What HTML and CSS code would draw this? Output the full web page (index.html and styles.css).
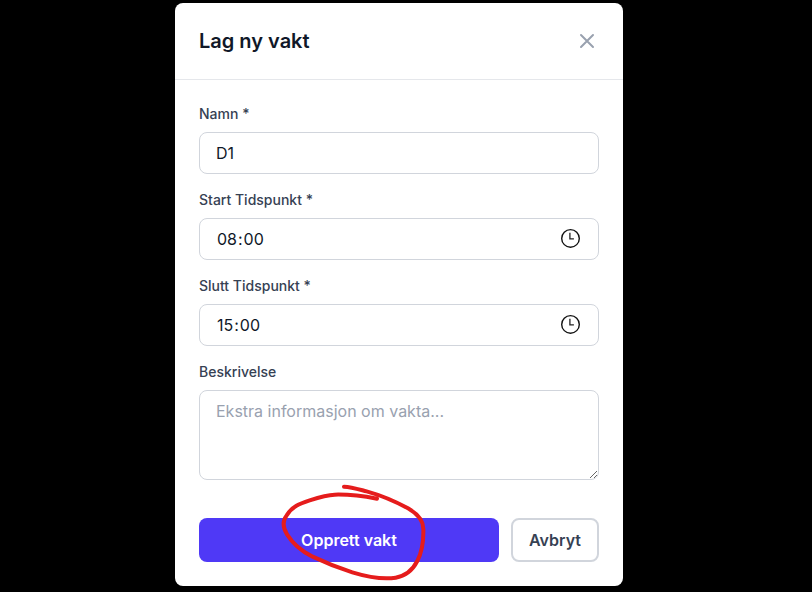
FILE: index.html
```html
<!DOCTYPE html>
<html lang="nn">
<head>
<meta charset="utf-8">
<title>Lag ny vakt</title>
<link rel="stylesheet" href="styles.css">
</head>
<body>
<main class="dialog">
  <header class="header">
    <h2 class="title">Lag ny vakt</h2>
    <button class="close" type="button">
      <svg width="24" height="24" viewBox="0 0 24 24" fill="none" stroke="currentColor" stroke-width="2" stroke-linecap="round"><path d="M6 18 18 6M6 6l12 12"/></svg>
    </button>
  </header>
  <form class="form">
    <div class="field">
      <label class="label" for="name">Namn *</label>
      <div class="control"><input class="input" id="name" type="text" value="D1"></div>
    </div>
    <div class="field">
      <span class="label">Start Tidspunkt *</span>
      <div class="control time">
        <div class="value"><span class="part">08</span><span>:</span><span class="part">00</span></div>
        <svg class="clock" width="20" height="20" viewBox="0 0 20 20" fill="none" stroke="#111"><circle cx="10.5" cy="10.4" r="8.8" stroke-width="1.4"/><path d="M9.9 4.8v6h4" stroke="#222" stroke-width="1.3"/></svg>
      </div>
    </div>
    <div class="field">
      <span class="label">Slutt Tidspunkt *</span>
      <div class="control time">
        <div class="value"><span class="part">15</span><span>:</span><span class="part">00</span></div>
        <svg class="clock" width="20" height="20" viewBox="0 0 20 20" fill="none" stroke="#111"><circle cx="10.5" cy="10.4" r="8.8" stroke-width="1.4"/><path d="M9.9 4.8v6h4" stroke="#222" stroke-width="1.3"/></svg>
      </div>
    </div>
    <div class="field">
      <label class="label" for="description">Beskrivelse</label>
      <textarea class="textarea" id="description" placeholder="Ekstra informasjon om vakta..."></textarea>
    </div>
    <div class="actions">
      <button class="button primary" type="button">Opprett vakt</button>
      <button class="button secondary" type="button">Avbryt</button>
    </div>
  </form>
  <svg class="marker" width="170" height="117" viewBox="0 0 510 351" fill="none" stroke="#e51c1c" stroke-width="12" stroke-linecap="round" stroke-linejoin="round"><path d="M222 35C244 36 263 42 290 49C340 63 378 80 414 100C444 117 460 137 460 162C461 197 456 231 442 258C427 287 405 303 377 308C340 314 293 306 247 292C203 278 164 262 126 244C94 228 66 202 51 178C38 157 38 137 50 121C67 94 88 86 119 76C144 68 169 60 194 59C235 58 279 63 321 71"/></svg>
</main>
</body>
</html>
```

FILE: styles.css
```css
* { box-sizing: border-box; }

body {
  margin: 0;
  height: 592px;
  padding-top: 3px;
  padding-left: 175px;
  overflow: hidden;
  background: #000;
  font-family: Inter, "Liberation Sans", sans-serif;
}

.dialog {
  position: relative;
  width: 448px;
  height: 583px;
  background: #fff;
  border-radius: 8px;
}

.header {
  display: flex;
  align-items: center;
  justify-content: space-between;
  height: 77px;
  padding: 0 24px;
  border-bottom: 1px solid #e5e7eb;
}

.title {
  margin: 0;
  color: #101828;
  font-size: 20px;
  font-weight: 600;
  line-height: 28px;
}

.close {
  display: flex;
  padding: 0;
  border: 0;
  background: none;
  color: #99a1af;
}

.form {
  display: flex;
  flex-direction: column;
  gap: 16px;
  padding: 24px;
}

.field {
  display: flex;
  flex-direction: column;
  gap: 8px;
}

.label {
  color: #364153;
  font-size: 14px;
  font-weight: 500;
  line-height: 20px;
}

.control {
  display: flex;
  align-items: center;
  height: 42px;
  padding: 0 16px;
  border: 1px solid #d1d5dc;
  border-radius: 8px;
}

.input {
  flex: 1;
  min-width: 0;
  padding: 0;
  border: 0;
  outline: 0;
  background: none;
  color: #101828;
  font: 400 16px/24px Inter, "Liberation Sans", sans-serif;
}

.time {
  justify-content: space-between;
  padding: 0 18px 2px 16px;
}

.value {
  display: flex;
  padding-top: 2px;
  color: #101828;
  font-size: 16px;
  line-height: 24px;
}

.part { padding: 0 1px; }

.clock { display: block; }

.textarea {
  display: block;
  width: 100%;
  height: 90px;
  padding: 8px 16px;
  border: 1px solid #d1d5dc;
  border-radius: 8px;
  outline: 0;
  resize: vertical;
  font: 400 16px/24px Inter, "Liberation Sans", sans-serif;
}

.textarea::placeholder { color: #99a1af; }

.actions {
  display: flex;
  gap: 12px;
  margin-top: 22px;
}

.button {
  height: 44px;
  padding: 0;
  border-radius: 8px;
  font: 600 16px/24px Inter, "Liberation Sans", sans-serif;
}

.primary {
  flex: 1;
  border: 0;
  background: #4f39f6;
  color: #fff;
}

.secondary {
  width: 88px;
  border: 2px solid #d1d5dc;
  background: #fff;
  color: #364153;
}

.marker {
  position: absolute;
  left: 95px;
  top: 472px;
  pointer-events: none;
}
```
